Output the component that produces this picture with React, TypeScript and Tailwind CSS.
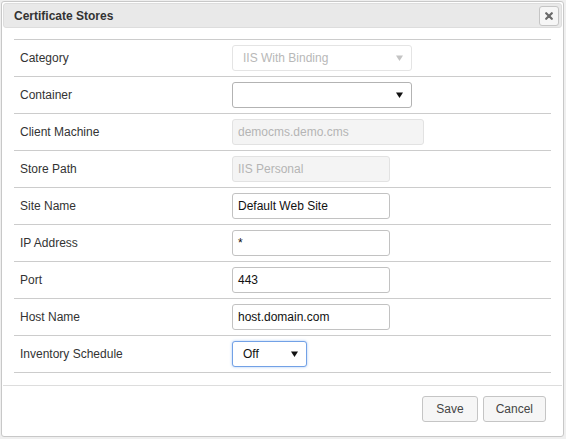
const font = "[font-family:'Liberation_Sans',Arial,sans-serif]";

type Field = {
  label: string;
  kind: "select" | "input";
  value: string;
  width: string;
  disabled?: boolean;
  focused?: boolean;
};

const fields: Field[] = [
  { label: "Category", kind: "select", value: "IIS With Binding", width: "w-[180px]", disabled: true },
  { label: "Container", kind: "select", value: "", width: "w-[180px]" },
  { label: "Client Machine", kind: "input", value: "democms.demo.cms", width: "w-[192px]", disabled: true },
  { label: "Store Path", kind: "input", value: "IIS Personal", width: "w-[158px]", disabled: true },
  { label: "Site Name", kind: "input", value: "Default Web Site", width: "w-[158px]" },
  { label: "IP Address", kind: "input", value: "*", width: "w-[158px]" },
  { label: "Port", kind: "input", value: "443", width: "w-[158px]" },
  { label: "Host Name", kind: "input", value: "host.domain.com", width: "w-[158px]" },
  { label: "Inventory Schedule", kind: "select", value: "Off", width: "w-[75px]", focused: true },
];

function Caret({ light }: { light?: boolean }) {
  return (
    <svg width="7" height="6" viewBox="0 0 7 6" className="shrink-0">
      <path d="M0 0.5 H7 L3.5 6 Z" fill={light ? "#c4c4c4" : "#111"} />
    </svg>
  );
}

function Control({ f }: { f: Field }) {
  if (f.kind === "select") {
    const box = f.disabled
      ? "border-[#e4e4e4] bg-white text-[#b8b8b8]"
      : f.focused
        ? "border-[#72a1e6] bg-white text-[#111] shadow-[0_0_3px_#a9c8f3]"
        : "border-[#b3b3b3] bg-white text-[#111]";
    return (
      <div
        className={`flex h-[26px] items-center justify-between rounded-[3px] border pl-[10px] pr-[8px] text-[12px] ${f.width} ${box}`}
      >
        <span>{f.value}</span>
        <Caret light={f.disabled} />
      </div>
    );
  }
  const box = f.disabled
    ? "border-[#e2e2e2] bg-[#f4f4f4] text-[#b4b4b4]"
    : "border-[#c2c2c2] bg-white text-[#111]";
  return (
    <div className={`flex h-[26px] items-center rounded-[3px] border px-[5px] text-[12px] ${f.width} ${box}`}>
      {f.value}
    </div>
  );
}

export default function App() {
  return (
    <div className={`h-[439px] w-[566px] bg-[#efefef] pt-px ${font}`}>
      <div className="ml-px h-[436px] w-[563px] rounded-[3px] border border-[#c8c8c8] bg-white p-px">
        <div className="flex h-[25px] items-center justify-between rounded-[3px] border border-[#dddddd] bg-[#e9e9e9] pl-[10px] pr-[2px]">
          <span className="text-[12px] font-bold text-[#333]">Certificate Stores</span>
          <button className="flex h-[20px] w-[20px] items-center justify-center rounded-[3px] border border-[#c5c5c5] bg-[#f6f6f6]">
            <svg width="8" height="8" viewBox="0 0 8 8">
              <path d="M1.2 1.2 L6.8 6.8 M6.8 1.2 L1.2 6.8" stroke="#6a6a6a" strokeWidth="2.2" strokeLinecap="round" />
            </svg>
          </button>
        </div>

        <div className="mx-[11px] mt-[11px] border-t border-[#cccccc]">
          {fields.map((f) => (
            <div key={f.label} className="flex h-[37px] items-center border-b border-[#cccccc]">
              <div className="w-[218px] pl-[6px] text-[12px] text-[#333]">{f.label}</div>
              <Control f={f} />
            </div>
          ))}
        </div>

        <div className="mt-[12px] flex justify-end gap-[5px] border-t border-[#dddddd] pr-[16px] pt-[10px]">
          <button className="h-[26px] rounded-[3px] border border-[#c5c5c5] bg-[#f6f6f6] px-[13px] text-[12px] text-[#454545]">
            Save
          </button>
          <button className="h-[26px] rounded-[3px] border border-[#c5c5c5] bg-[#f6f6f6] px-[12px] text-[12px] text-[#454545]">
            Cancel
          </button>
        </div>
      </div>
    </div>
  );
}
